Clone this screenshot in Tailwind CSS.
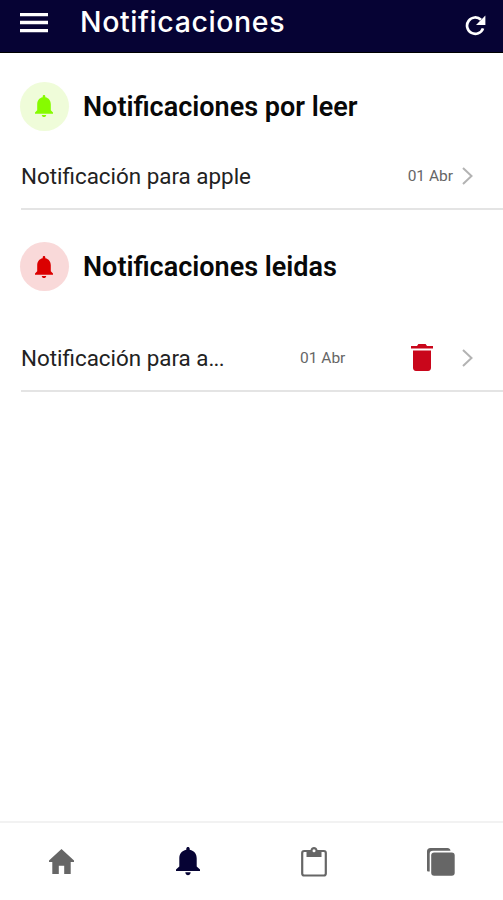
<!DOCTYPE html>
<html lang="es">
<head>
<meta charset="utf-8">
<title>Notificaciones</title>
<script src="https://cdn.jsdelivr.net/npm/@tailwindcss/browser@4"></script>
</head>
<body class="flex h-[900px] w-[503px] flex-col overflow-hidden bg-white font-['Roboto',sans-serif] text-[#111]">
<header class="flex h-[53px] shrink-0 items-center border-b border-black bg-[#060334] pb-2 pl-5 pr-[17px] text-white">
  <svg class="mt-[2px] h-5 w-7" viewBox="0 0 28 20" fill="currentColor"><path d="M0 0h28v3.3H0zM0 7.8h28v3.4H0zM0 15.9h28v3.3H0z"/></svg>
  <h1 class="ml-[32px] font-['Inter',sans-serif] text-[28.5px] leading-8 font-medium tracking-[0.6px] whitespace-nowrap">Notificaciones</h1>
  <svg class="mt-[7px] ml-auto h-[21px] w-[21px]" viewBox="0 0 21 21"><path d="M18 13.4A8.2 8.2 0 1 1 16 4.8" fill="none" stroke="currentColor" stroke-width="2.7"/><path d="M20.4.6v9.4H11z" fill="currentColor"/></svg>
</header>
<main class="flex-1">
  <section>
    <div class="flex items-center pt-[29px] pl-[20px]">
      <span class="flex size-[49px] items-center justify-center rounded-full bg-[#effcd9] pr-px text-[#86fb00]">
        <svg class="h-[23px] w-[18px]" viewBox="0 0 18 23" fill="currentColor"><path d="M7.7 2.3V1.2c0-1.6 2.6-1.6 2.6 0v1.1c3.6.7 5.5 3.5 5.5 7v6L18 17.5v1.2H0v-1.2l2.2-2.2v-6c0-3.5 1.9-6.3 5.5-7zM6.8 20h4.4c0 2.8-4.4 2.8-4.4 0z"/></svg>
      </span>
      <h2 class="ml-[14px] text-[27px] leading-[30px] font-semibold whitespace-nowrap text-[#080808]">Notificaciones por leer</h2>
    </div>
    <div class="mt-[13px] ml-[21px] flex h-[66px] items-center border-b-2 border-[#e4e4e4] pr-[30px]">
      <p class="mt-[2px] text-[22.4px] whitespace-nowrap text-[#222]">Notificación para apple</p>
      <time class="mt-[2px] ml-auto text-[15.5px] text-[#666]">01 Abr</time>
      <svg class="ml-[9px] h-[18px] w-[11px]" viewBox="0 0 11 18"><path d="m1 1 8.5 8L1 17" fill="none" stroke="#b3b3b3" stroke-width="2"/></svg>
    </div>
  </section>
  <section>
    <div class="flex items-center pt-[32px] pl-[20px]">
      <span class="flex size-[49px] items-center justify-center rounded-full bg-[#f9d9d9] pr-px text-[#db0000]">
        <svg class="mt-px h-[23px] w-[18px]" viewBox="0 0 18 23" fill="currentColor"><path d="M7.7 2.3V1.2c0-1.6 2.6-1.6 2.6 0v1.1c3.6.7 5.5 3.5 5.5 7v6L18 17.5v1.2H0v-1.2l2.2-2.2v-6c0-3.5 1.9-6.3 5.5-7zM6.8 20h4.4c0 2.8-4.4 2.8-4.4 0z"/></svg>
      </span>
      <h2 class="ml-[14px] text-[27px] leading-[30px] font-semibold whitespace-nowrap text-[#080808]">Notificaciones leidas</h2>
    </div>
    <div class="mt-[35px] ml-[21px] flex h-[66px] items-center border-b-2 border-[#e4e4e4] pr-[30px]">
      <p class="mt-[2px] w-[279px] text-[22.4px] whitespace-nowrap text-[#222]">Notificación para a<span class="tracking-[-0.8px]">...</span></p>
      <time class="mt-[2px] text-[15.5px] whitespace-nowrap text-[#666]">01 Abr</time>
      <svg class="mb-[2px] ml-auto h-[27px] w-[22px]" viewBox="0 0 22 27" fill="#c9061b"><path d="M0 2h6l1.4-2h7.2L16 2h6v2.4H0zM2 6.6h18v17.2c0 2-1 3.2-3 3.2H5c-2 0-3-1.2-3-3.2z"/></svg>
      <svg class="mb-px ml-[29px] h-[18px] w-[11px]" viewBox="0 0 11 18"><path d="m1 1 8.5 8L1 17" fill="none" stroke="#b3b3b3" stroke-width="2"/></svg>
    </div>
  </section>
</main>
<nav class="flex h-[79px] shrink-0 items-center justify-between border-t-2 border-[#f2f2f2] pr-[48px] pl-[49px] text-[#666]">
  <svg class="h-[25px] w-[25px]" viewBox="0 0 25 25" fill="currentColor"><path d="M12.5 0 25 11.5V13h-3.3v12h-6.5v-8.2H9.8V25H3.3V13H0v-1.5z"/></svg>
  <svg class="ml-[2px] h-[29px] w-[24px]" viewBox="0 0 24 29" fill="#060334"><path d="M10.3 2.8V1.7c0-2.2 3.4-2.2 3.4 0v1.1c4.7 1 7 4.2 7 8.7v8.1l3.3 3V24H0v-1.4l3.3-3v-8.1c0-4.5 2.3-7.7 7-8.7zM9.3 25.3h5.4c-.2 4-5.2 4-5.4 0z"/></svg>
  <svg class="ml-[2px] h-[30px] w-[26px]" viewBox="0 0 26 30"><rect x="1.2" y="4" width="23.6" height="24.5" rx="2" fill="none" stroke="currentColor" stroke-width="2.2"/><path d="M5.5 3h4c.6-4 6.4-4 7 0h4v7h-15z" fill="currentColor"/><circle cx="13" cy="3.7" r="1.5" fill="#fff"/></svg>
  <svg class="h-[28px] w-[28px]" viewBox="0 0 28 28" fill="currentColor"><path d="M0 22.5V3.5C0 1.2 1.2 0 3.5 0h17c1.6 0 2.8 1 3 2.7H6C3.7 2.7 2.7 3.7 2.7 6v17.5C1 23.5 0 23.5 0 22.5z"/><rect x="4.2" y="4.5" width="23.5" height="23.2" rx="3"/></svg>
</nav>
</body>
</html>
